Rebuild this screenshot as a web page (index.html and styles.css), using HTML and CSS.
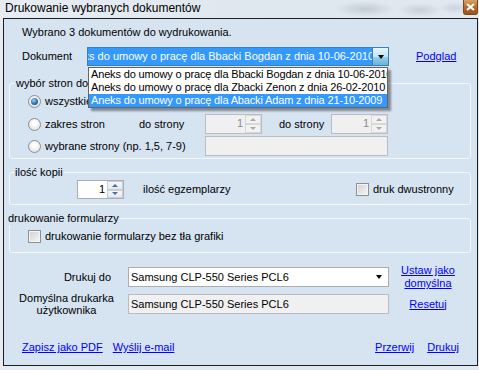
FILE: index.html
```html
<!DOCTYPE html>
<html lang="pl">
<head>
    <meta charset="UTF-8">
    <meta name="viewport" content="width=device-width, initial-scale=1.0">
    <title>Drukowanie wybranych dokumentów</title>
    <link rel="stylesheet" href="styles.css">
</head>
<body>
<div class="window">
    <div class="titlebar">
        <span class="title">Drukowanie wybranych dokumentów</span>
        <span class="close">
            <svg width="9" height="8" viewBox="0 0 9 8"><path d="M1 1 L8 7 M8 1 L1 7" stroke="#fff" stroke-width="2"/></svg>
        </span>
    </div>

    <div class="client">
        <div class="info">Wybrano 3 dokumentów do wydrukowania.</div>

        <div class="doc-row">
            <span class="doc-label">Dokument</span>
            <div class="combo combo-focus">
                <div class="combo-text"><span>Aneks do umowy o pracę dla Bbacki Bogdan z dnia 10-06-2010</span></div>
                <div class="combo-btn"><span class="arrow"></span></div>
                <ul class="droplist">
                    <li>Aneks do umowy o pracę dla Bbacki Bogdan z dnia 10-06-2010</li>
                    <li>Aneks do umowy o pracę dla Zbacki Zenon z dnia 26-02-2010</li>
                    <li class="selected">Aneks do umowy o pracę dla Abacki Adam z dnia 21-10-2009</li>
                </ul>
            </div>
            <a class="link podglad" href="#">Podglad</a>
        </div>

        <fieldset class="group group-pages">
            <legend>wybór stron do wydruku</legend>
            <div class="opt-row row-all">
                <span class="radio checked"></span>
                <span>wszystkie</span>
            </div>
            <div class="opt-row row-range">
                <span class="radio"></span>
                <span class="lbl-range">zakres stron</span>
                <span class="lbl-from">do strony</span>
                <div class="spin disabled">
                    <div class="spin-val">1</div>
                    <div class="spin-btns"><span class="up"></span><span class="down"></span></div>
                </div>
                <span class="lbl-to">do strony</span>
                <div class="spin disabled">
                    <div class="spin-val">1</div>
                    <div class="spin-btns"><span class="up"></span><span class="down"></span></div>
                </div>
            </div>
            <div class="opt-row row-pick">
                <span class="radio"></span>
                <span class="lbl-pick">wybrane strony (np. 1,5, 7-9)</span>
                <div class="textbox disabled pick-box"></div>
            </div>
        </fieldset>

        <fieldset class="group group-copies">
            <legend>ilość kopii</legend>
            <div class="copies-row">
                <div class="spin copies-spin">
                    <div class="spin-val">1</div>
                    <div class="spin-btns"><span class="up"></span><span class="down"></span></div>
                </div>
                <span class="lbl-copies">ilość egzemplarzy</span>
                <span class="check"></span>
                <span>druk dwustronny</span>
            </div>
        </fieldset>

        <fieldset class="group group-forms">
            <legend>drukowanie formularzy</legend>
            <div class="forms-row">
                <span class="check"></span>
                <span>drukowanie formularzy bez tła grafiki</span>
            </div>
        </fieldset>

        <div class="printer-row">
            <span class="printer-label right">Drukuj do</span>
            <div class="combo printer-combo">
                <div class="combo-value">Samsung CLP-550 Series PCL6</div>
                <span class="arrow"></span>
            </div>
            <a class="link printer-link" href="#">Ustaw jako<br>domyślna</a>
        </div>

        <div class="printer-row default-row">
            <span class="printer-label">Domyślna drukarka<br>użytkownika</span>
            <div class="textbox disabled printer-box">Samsung CLP-550 Series PCL6</div>
            <a class="link printer-link" href="#">Resetuj</a>
        </div>

        <div class="bottom-row">
            <a class="link" href="#">Zapisz jako PDF</a>
            <a class="link mail" href="#">Wyślij e-mail</a>
            <span class="spacer"></span>
            <a class="link" href="#">Przerwij</a>
            <a class="link print" href="#">Drukuj</a>
        </div>
    </div>
</div>
</body>
</html>
```

FILE: styles.css
```css
* {
    box-sizing: border-box;
}
html, body {
    margin: 0;
    padding: 0;
}
body {
    width: 479px;
    height: 370px;
    overflow: hidden;
    font-family: 'Liberation Sans', Arial, sans-serif;
    font-size: 11px;
    line-height: 13px;
    color: #000;
    background-color: #dde5ee;
}
.window {
    width: 479px;
    height: 370px;
    display: flex;
    flex-direction: column;
    background:
        radial-gradient(ellipse 30px 8px at 365px 9px, rgba(140, 150, 160, 0.35), transparent),
        radial-gradient(ellipse 22px 7px at 420px 10px, rgba(140, 150, 160, 0.3), transparent),
        radial-gradient(ellipse 16px 6px at 455px 8px, rgba(140, 150, 160, 0.25), transparent),
        linear-gradient(to right, #e6ecf2, #dfe7ef 60%, #e2e9f0);
}
.titlebar {
    height: 18px;
    flex: none;
    display: flex;
    justify-content: space-between;
    align-items: flex-start;
    padding: 0 1px 0 5px;
}
.title {
    margin-top: 1px;
    font-size: 12px;
    line-height: 14px;
}
.close {
    width: 15px;
    height: 15px;
    display: flex;
    align-items: center;
    justify-content: center;
    border: 1px solid #7a4a1e;
    border-top: none;
    border-radius: 0 0 3px 3px;
    background: linear-gradient(#d9a067, #b5682a 55%, #9b5219);
}
.client {
    flex: none;
    margin: 0 1px 0 3px;
    width: 475px;
    height: 348px;
    border: 1px solid #1e1e1e;
    background-color: #d6e3f1;
    padding-bottom: 11px;
    display: flex;
    flex-direction: column;
}
.info {
    margin-top: 7px;
    padding-left: 18px;
}

/* dokument */
.doc-row {
    margin-top: 8px;
    height: 19px;
    display: flex;
    align-items: center;
    padding-left: 18px;
}
.doc-label {
    width: 65px;
}
.combo {
    position: relative;
    display: flex;
    border: 1px solid #abadb3;
    background-color: #fff;
}
.combo-focus {
    width: 302px;
    height: 19px;
    border-color: #3c7fb1;
}
.combo-text {
    flex: 1;
    display: flex;
    justify-content: flex-end;
    overflow: hidden;
    white-space: nowrap;
    background-color: #3399ff;
    color: #fff;
}
.combo-text span {
    margin-right: -2px;
    line-height: 17px;
}
.combo-btn {
    width: 16px;
    display: flex;
    align-items: center;
    justify-content: center;
    border-left: 1px solid #3c7fb1;
    background: linear-gradient(#e5f4fc, #c4e5f6 50%, #98d1ef 51%, #68b3db);
}
.arrow {
    width: 0;
    height: 0;
    border-left: 3.5px solid transparent;
    border-right: 3.5px solid transparent;
    border-top: 4px solid #000;
}
.droplist {
    position: absolute;
    top: 19px;
    left: 0;
    width: 300px;
    margin: 0;
    padding: 0;
    list-style: none;
    background-color: #fff;
    border: 1px solid #646464;
    box-shadow: 3px 3px 2px rgba(0, 0, 0, 0.4);
    z-index: 5;
    letter-spacing: -0.15px;
}
.droplist li {
    height: 13px;
    padding-left: 2px;
    white-space: nowrap;
    overflow: hidden;
}
.droplist li.selected {
    background-color: #3399ff;
    color: #fff;
}
.link {
    color: #0000ff;
    text-decoration: underline;
}
.podglad {
    margin-left: 27px;
}

/* grupy */
.group {
    margin: 0 0 0 5px;
    padding: 0;
    width: 462px;
    border: 1px solid #f3f6fa;
    border-radius: 3px;
    min-width: 0;
}
.group legend {
    padding: 0 1px;
    line-height: 13px;
}
.group-pages {
    margin-top: 11px;
    padding-bottom: 2px;
}
.group-pages legend {
    margin-left: 5px;
}
.group-copies {
    margin-top: 7px;
    padding-bottom: 5px;
}
.group-copies legend {
    margin-left: 4px;
}
.group-forms {
    margin-top: 7px;
    padding-bottom: 7px;
}
.group-forms legend {
    margin-left: -3px;
}
.opt-row {
    height: 20px;
    display: flex;
    align-items: center;
    padding-left: 18px;
}
.row-all {
    margin-top: 1px;
}
.row-range {
    margin-top: 3px;
}
.row-pick {
    margin-top: 2px;
}
.radio {
    width: 13px;
    height: 13px;
    margin-right: 4px;
    border-radius: 50%;
    border: 1px solid #8d8d8d;
    background: radial-gradient(circle at 50% 40%, #ffffff 20%, #dcdcdc 90%);
    display: flex;
    align-items: center;
    justify-content: center;
}
.radio.checked::after {
    content: '';
    width: 7px;
    height: 7px;
    border-radius: 50%;
    background: radial-gradient(circle at 40% 35%, #a8d4f7 0, #3a7fc6 45%, #0c386b 100%);
}
.lbl-range {
    width: 94px;
}
.lbl-from {
    width: 66px;
}
.lbl-to {
    width: 52px;
    margin-left: 17px;
}
.lbl-pick {
    width: 160px;
}

/* pola */
.textbox {
    border: 1px solid #abadb3;
    border-top-color: #9a9ea6;
    background-color: #fff;
}
.textbox.disabled {
    background-color: #f0f0f0;
    border-color: #b9bcc1;
}
.pick-box {
    width: 183px;
    height: 20px;
}
.spin {
    width: 57px;
    height: 20px;
    display: flex;
    border: 1px solid #abadb3;
    background-color: #fff;
}
.spin.disabled {
    background-color: #f0f0f0;
    border-color: #b9bcc1;
    color: #8a8a8a;
}
.spin-val {
    flex: 1;
    text-align: right;
    padding-right: 2px;
    line-height: 17px;
}
.spin-btns {
    width: 16px;
    display: flex;
    flex-direction: column;
}
.spin-btns span {
    flex: 1;
    display: flex;
    align-items: center;
    justify-content: center;
    border: 1px solid #c9ced6;
    background: linear-gradient(#f6f8fa, #e3e8ee);
}
.spin-btns span::after {
    content: '';
    border-left: 3px solid transparent;
    border-right: 3px solid transparent;
}
.spin-btns .up::after {
    border-bottom: 3px solid #4a6d9c;
}
.spin-btns .down::after {
    border-top: 3px solid #4a6d9c;
}
.spin.disabled .spin-btns span {
    border-color: #d8d8d8;
    background: #f2f2f2;
}
.spin.disabled .up::after {
    border-bottom-color: #a9a9a9;
}
.spin.disabled .down::after {
    border-top-color: #a9a9a9;
}
.copies-row {
    margin-top: 1px;
    height: 19px;
    display: flex;
    align-items: center;
    padding-left: 67px;
}
.copies-spin {
    width: 47px;
    height: 19px;
    color: #000;
}
.lbl-copies {
    width: 213px;
    margin-left: 19px;
}
.check {
    width: 13px;
    height: 13px;
    margin-right: 4px;
    border: 1px solid #8e8f8f;
    background: linear-gradient(135deg, #d0d0d0, #f7f7f7);
    box-shadow: inset 0 0 0 1px #f4f4f4;
}
.forms-row {
    margin-top: 2px;
    height: 18px;
    display: flex;
    align-items: center;
    padding-left: 18px;
}

/* drukarka */
.printer-row {
    margin-top: 11px;
    height: 26px;
    display: flex;
    align-items: center;
}
.default-row {
    margin-top: 2px;
    height: 24px;
}
.printer-label {
    margin-left: 10px;
    width: 105px;
    text-align: center;
    line-height: 12px;
}
.printer-label.right {
    text-align: right;
    padding-right: 8px;
}
.printer-combo {
    margin-left: 9px;
    width: 261px;
    height: 20px;
    align-items: center;
    padding: 0 6px 0 2px;
}
.combo-value {
    flex: 1;
}
.printer-box {
    margin-left: 9px;
    width: 261px;
    height: 20px;
    padding-left: 2px;
    line-height: 18px;
}
.printer-link {
    margin-left: 3px;
    width: 72px;
    text-align: center;
}

/* dolne linki */
.bottom-row {
    margin-top: auto;
    display: flex;
    padding: 0 18px;
}
.mail {
    margin-left: 10px;
}
.spacer {
    flex: 1;
}
.print {
    margin-left: 13px;
}
```
